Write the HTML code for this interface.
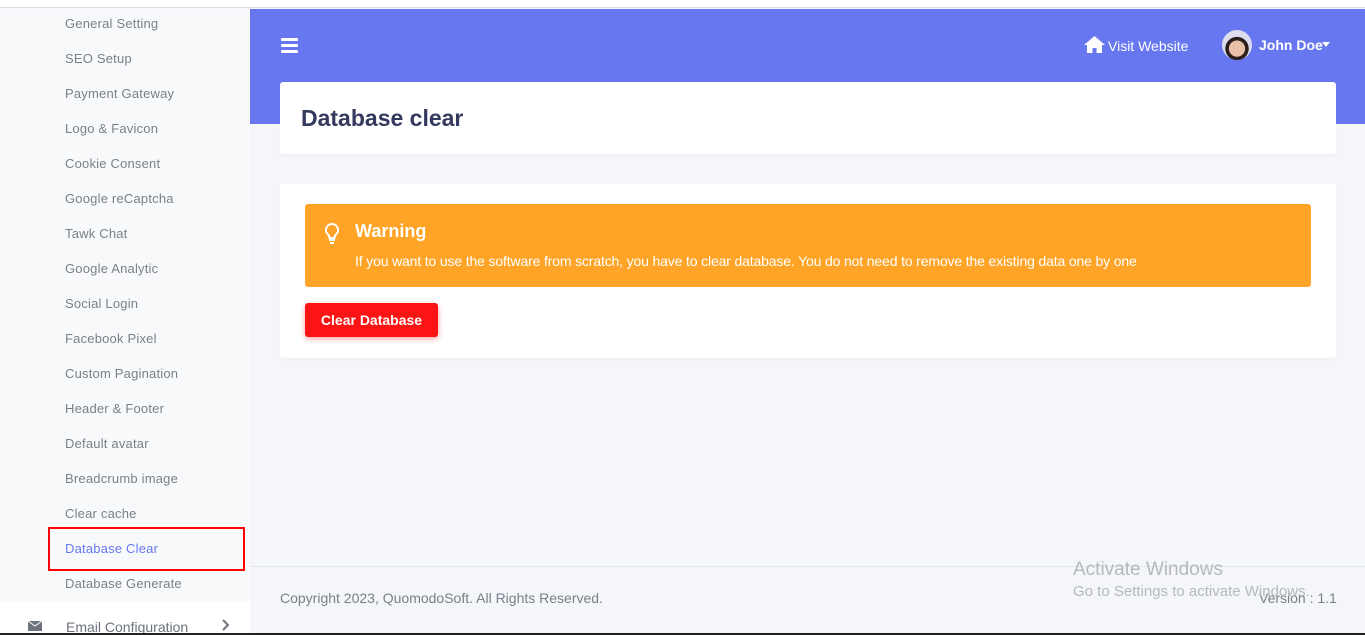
<!DOCTYPE html>
<html><head><style>
*{margin:0;padding:0;box-sizing:border-box}
body{width:1365px;height:635px;overflow:hidden;background:#f4f6f9;font-family:"Liberation Sans",sans-serif;position:relative}
.top{position:absolute;left:0;top:0;width:1365px;height:8px;background:#fff;border-bottom:1px solid #ddd}
.side{position:absolute;left:0;top:9px;width:250px;height:592px;background:#f8f9fb}
.side a{position:absolute;left:65px;font-size:13px;color:#7a7f89;text-decoration:none;letter-spacing:.2px}
.side2{position:absolute;left:0;top:601px;width:250px;height:34px;background:#fff}
.hdr{position:absolute;left:250px;top:9px;width:1115px;height:115px;background:#6777ef}
.card{position:absolute;background:#fff;border-radius:3px;box-shadow:0 2px 4px rgba(0,0,0,.03)}
.foot{position:absolute;left:250px;top:566px;width:1115px;border-top:1px solid #e3e6ec}
</style></head><body>
<div class="top"></div>
<div class="side">
<a style="top:7px">General Setting</a>
<a style="top:42px">SEO Setup</a>
<a style="top:77px">Payment Gateway</a>
<a style="top:112px">Logo &amp; Favicon</a>
<a style="top:147px">Cookie Consent</a>
<a style="top:182px">Google reCaptcha</a>
<a style="top:217px">Tawk Chat</a>
<a style="top:252px">Google Analytic</a>
<a style="top:287px">Social Login</a>
<a style="top:322px">Facebook Pixel</a>
<a style="top:357px">Custom Pagination</a>
<a style="top:392px">Header &amp; Footer</a>
<a style="top:427px">Default avatar</a>
<a style="top:462px">Breadcrumb image</a>
<a style="top:497px">Clear cache</a>
<a style="top:532px;color:#6777ef">Database Clear</a>
<a style="top:567px">Database Generate</a>
</div>
<div style="position:absolute;left:48px;top:527px;width:197px;height:44px;border:2px solid #f00"></div>
<div class="side2">
<svg style="position:absolute;left:28px;top:20px" width="14" height="10"><rect width="14" height="10" fill="#6c737d"/><path d="M0 0L7 5L14 0" stroke="#fff" fill="none"/></svg>
<span style="position:absolute;left:66px;top:18px;font-size:14px;color:#6c737d">Email Configuration</span>
<svg style="position:absolute;left:221px;top:18px" width="8" height="12" viewBox="0 0 8 12"><path d="M2 1l5 5-5 5" stroke="#6c737d" stroke-width="2" fill="none"/></svg>
</div>
<div style="position:absolute;left:0;top:633px;width:1365px;height:2px;background:#222"></div>
<div class="hdr">
<div style="position:absolute;left:31px;top:29px;width:17px;height:3px;background:#fff;border-radius:1px;box-shadow:0 6px 0 #fff,0 12px 0 #fff"></div>
<svg style="position:absolute;left:834px;top:27px" width="21" height="17" viewBox="0 0 21 17"><path d="M10.5 0L0 9h3v8h5.5v-5h4v5H18V9h3z" fill="#fff"/></svg>
<span style="position:absolute;left:858px;top:29px;color:#fff;font-size:14px">Visit Website</span>
<div style="position:absolute;left:972px;top:21px;width:30px;height:30px;border-radius:50%;background:radial-gradient(circle at 50% 62%,#e8c1a8 33%,#2a1d1a 35%,#2a1d1a 48%,#dde 50%)"></div>
<span style="position:absolute;left:1009px;top:28px;color:#fff;font-size:14px;font-weight:bold">John Doe</span>
<svg style="position:absolute;left:1072px;top:33px" width="8" height="5"><path d="M0 0h8L4 5z" fill="#fff"/></svg>
</div>
<div class="card" style="left:280px;top:82px;width:1056px;height:72px"><div style="position:absolute;left:21px;top:23px;font-size:23px;font-weight:bold;color:#34395e">Database clear</div></div>
<div class="card" style="left:280px;top:184px;width:1056px;height:174px">
<div style="position:absolute;left:25px;top:20px;width:1006px;height:83px;background:#ffa426;border-radius:3px">
<svg style="position:absolute;left:19px;top:18px" width="16" height="22" viewBox="0 0 16 22"><path d="M8 2a6 6 0 0 0-4 10.5c1 1 1.5 2 1.5 3.5h5c0-1.5.5-2.5 1.5-3.5A6 6 0 0 0 8 2z" stroke="#fff" stroke-width="2" fill="none"/><rect x="5" y="17" width="6" height="2" fill="#fff"/><rect x="6" y="20" width="4" height="2" fill="#fff"/></svg>
<div style="position:absolute;left:50px;top:17px;font-size:18px;font-weight:bold;color:#fff">Warning</div>
<div style="position:absolute;left:50px;top:49px;font-size:14px;letter-spacing:-0.15px;color:#fff">If you want to use the software from scratch, you have to clear database. You do not need to remove the existing data one by one</div>
</div>
<div style="position:absolute;left:25px;top:119px;width:133px;height:34px;background:#fc1414;border-radius:3px;box-shadow:0 2px 6px rgba(252,20,20,.4);color:#fff;font-size:14px;font-weight:bold;text-align:center;line-height:34px">Clear Database</div>
</div>
<div class="foot">
<span style="position:absolute;left:30px;top:23px;font-size:14px;color:#7a7f89">Copyright 2023, QuomodoSoft. All Rights Reserved.</span>
<span style="position:absolute;left:1009px;top:23px;font-size:14px;color:#7a7f89">Version : 1.1</span>
<span style="position:absolute;left:823px;top:-8px;font-size:19px;color:#b5b8bd">Activate Windows</span>
<span style="position:absolute;left:823px;top:16px;font-size:15px;color:#b5b8bd">Go to Settings to activate Windows.</span>
</div>
</body></html>
